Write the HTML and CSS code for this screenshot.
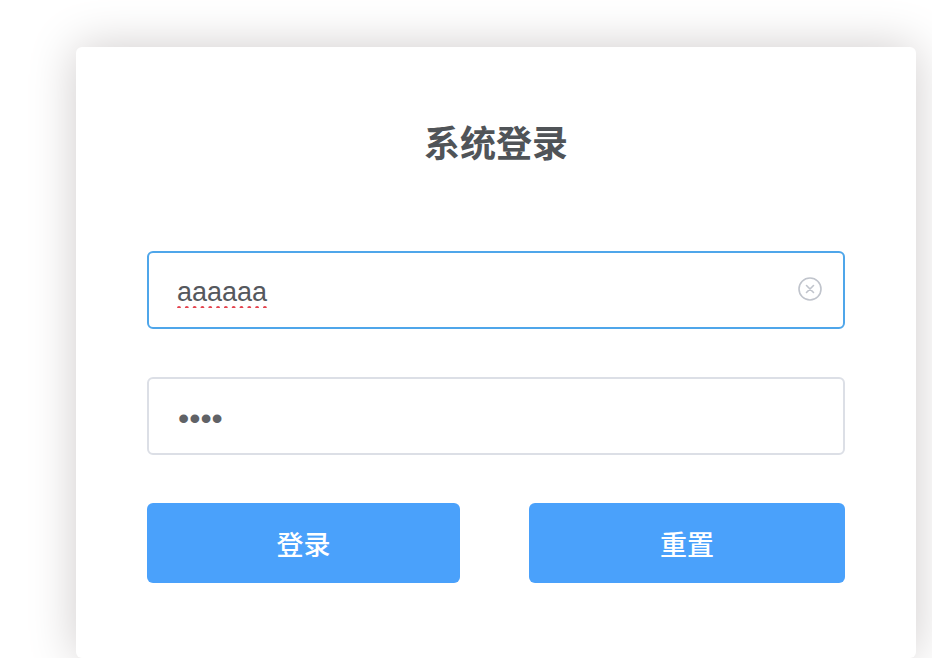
FILE: index.html
```html
<!DOCTYPE html>
<html lang="zh-CN">
<head>
    <meta charset="utf-8">
    <title>系统登录</title>
    <link rel="stylesheet" href="styles.css">
</head>
<body>
    <div class="login-box">
        <h3 class="title">系统登录</h3>
        <div class="field is-focus">
            <input type="text" class="inner spell" value="aaaaaa" spellcheck="false" />
            <span class="suffix">
                <svg width="26" height="26" viewBox="0 0 26 26">
                    <circle cx="13" cy="13" r="11" fill="none" stroke="#c0c4cc" stroke-width="1.6" />
                    <path d="M9.5 9.5 L16.5 16.5 M16.5 9.5 L9.5 16.5" stroke="#c0c4cc" stroke-width="1.6" stroke-linecap="round" />
                </svg>
            </span>
        </div>
        <div class="field">
            <input type="password" class="inner" value="1234" />
        </div>
        <div class="btns">
            <button type="button" class="btn btn-primary">登录</button>
            <button type="button" class="btn btn-primary">重置</button>
        </div>
    </div>
</body>
</html>
```
FILE: styles.css
```css
html, body { margin: 0; background: #fff; }
body { padding: 47px 0 0 76px; font-family: "Liberation Sans", "Noto Sans CJK SC", sans-serif; }
.login-box { width: 840px; box-sizing: border-box; padding: 76px 71px 75px; background: #fff; border-radius: 6px; box-shadow: 0 0 48px #cfcbcb; }
.title { margin: 0 0 85px; text-align: center; font-size: 36px; line-height: 43px; font-weight: bold; color: #505458; }
.field { position: relative; height: 78px; margin-bottom: 48px; }
.inner { width: 100%; height: 100%; box-sizing: border-box; padding: 5px 60px 0 28px; border: 2px solid #dcdfe6; border-radius: 6px; font-family: inherit; font-size: 27px; color: #55585d; outline: none; background: #fff; }
.is-focus .inner { border-color: #4fa6ea; }
.spell { text-decoration: underline dotted #e4424d; text-decoration-thickness: 4px; text-underline-offset: 5px; }
input[type=password] { font-size: 32px; padding-top: 4px; padding-left: 29px; color: #606266; }
.suffix { position: absolute; right: 22px; top: 25px; width: 26px; height: 26px; }
.btns { display: flex; justify-content: space-between; }
.btn { height: 80px; border: 0; border-radius: 6px; font-family: inherit; font-size: 27px; font-weight: 500; color: #fff; cursor: pointer; }
.btn-primary { background: #4aa1fb; }
.btn:first-child { width: 313px; }
.btn:last-child { width: 316px; }
```
